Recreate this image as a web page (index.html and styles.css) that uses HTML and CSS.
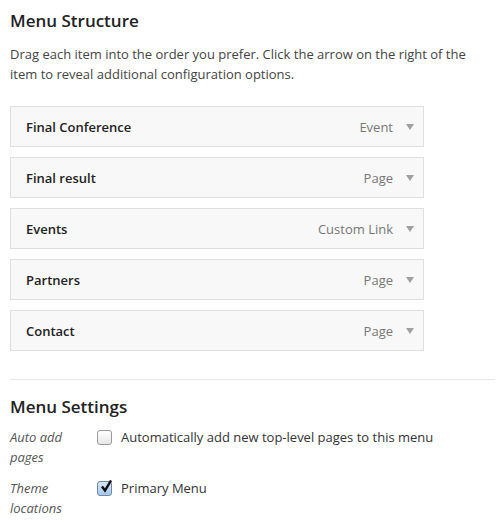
FILE: index.html
```html
<!DOCTYPE html>
<html lang="en">
<head>
    <meta charset="UTF-8">
    <meta name="viewport" content="width=device-width, initial-scale=1.0">
    <title>Menu Structure</title>
    <link rel="stylesheet" href="styles.css">
</head>
<body>

    <h2>Menu Structure</h2>
    <p class="hint">Drag each item into the order you prefer. Click the arrow on the right of the item to reveal additional configuration options.</p>

    <ul class="menu-items">
        <li class="menu-item">
            <span class="item-title">Final Conference</span>
            <span class="item-type">Event</span>
            <span class="item-arrow"></span>
        </li>
        <li class="menu-item">
            <span class="item-title">Final result</span>
            <span class="item-type">Page</span>
            <span class="item-arrow"></span>
        </li>
        <li class="menu-item">
            <span class="item-title">Events</span>
            <span class="item-type">Custom Link</span>
            <span class="item-arrow"></span>
        </li>
        <li class="menu-item">
            <span class="item-title">Partners</span>
            <span class="item-type">Page</span>
            <span class="item-arrow"></span>
        </li>
        <li class="menu-item">
            <span class="item-title">Contact</span>
            <span class="item-type">Page</span>
            <span class="item-arrow"></span>
        </li>
    </ul>

    <div class="settings">
        <h3>Menu Settings</h3>
        <div class="setting-row">
            <div class="setting-name">Auto add pages</div>
            <label class="setting-input">
                <span class="checkbox"></span>
                Automatically add new top-level pages to this menu
            </label>
        </div>
        <div class="setting-row">
            <div class="setting-name">Theme locations</div>
            <label class="setting-input">
                <span class="checkbox checked">
                    <svg width="14" height="14" viewBox="0 0 14 14"><path d="M3 6.5 L6 10.5 L12 0.5" fill="none" stroke="#111" stroke-width="2.4"/></svg>
                </span>
                Primary Menu
            </label>
        </div>
    </div>

</body>
</html>
```

FILE: styles.css
```css
body {
    margin: 0;
    padding: 0 5px 0 10px;
    font-family: "Open Sans", sans-serif;
    font-size: 13px;
    color: #333;
    background: #fff;
}

h2, h3 {
    font-size: 17px;
    font-weight: 600;
    color: #222;
    margin: 0;
}

h2 {
    padding-top: 9px;
}

.hint {
    margin: 12px 0 0 0;
    line-height: 20px;
    color: #444;
}

.menu-items {
    list-style: none;
    margin: 22px 0 0 0;
    padding: 0;
    width: 414px;
}

.menu-item {
    display: flex;
    align-items: center;
    height: 39px;
    margin-bottom: 10px;
    padding: 0 9px 0 15px;
    background: #f8f8f8;
    border: 1px solid #dfdfdf;
}

.item-title {
    flex: 1;
    font-weight: 600;
    color: #222;
}

.item-type {
    color: #777;
}

.item-arrow {
    width: 0;
    height: 0;
    margin-left: 13px;
    border-left: 4px solid transparent;
    border-right: 4px solid transparent;
    border-top: 6px solid #a0a0a0;
}

.settings {
    margin-top: 28px;
    border-top: 1px solid #e8e8e8;
    padding-top: 15px;
}

.setting-row {
    display: flex;
    margin-top: 9px;
}

.setting-row + .setting-row {
    margin-top: 11px;
}

.setting-name {
    width: 78px;
    font-style: italic;
    color: #555;
    line-height: 20px;
}

.setting-input {
    display: flex;
    align-items: flex-start;
    gap: 9px;
    line-height: 20px;
    padding-left: 9px;
}

.checkbox {
    width: 13px;
    height: 13px;
    margin-top: 3px;
    border: 1px solid #9a9a9a;
    border-radius: 3px;
    background: linear-gradient(#fff, #e6e6e6);
    position: relative;
}

.checkbox.checked {
    background: linear-gradient(#d7e6f7, #a9c8ec);
    border-color: #6d88ab;
}

.checkbox svg {
    position: absolute;
    left: 1px;
    top: -2px;
}
```
